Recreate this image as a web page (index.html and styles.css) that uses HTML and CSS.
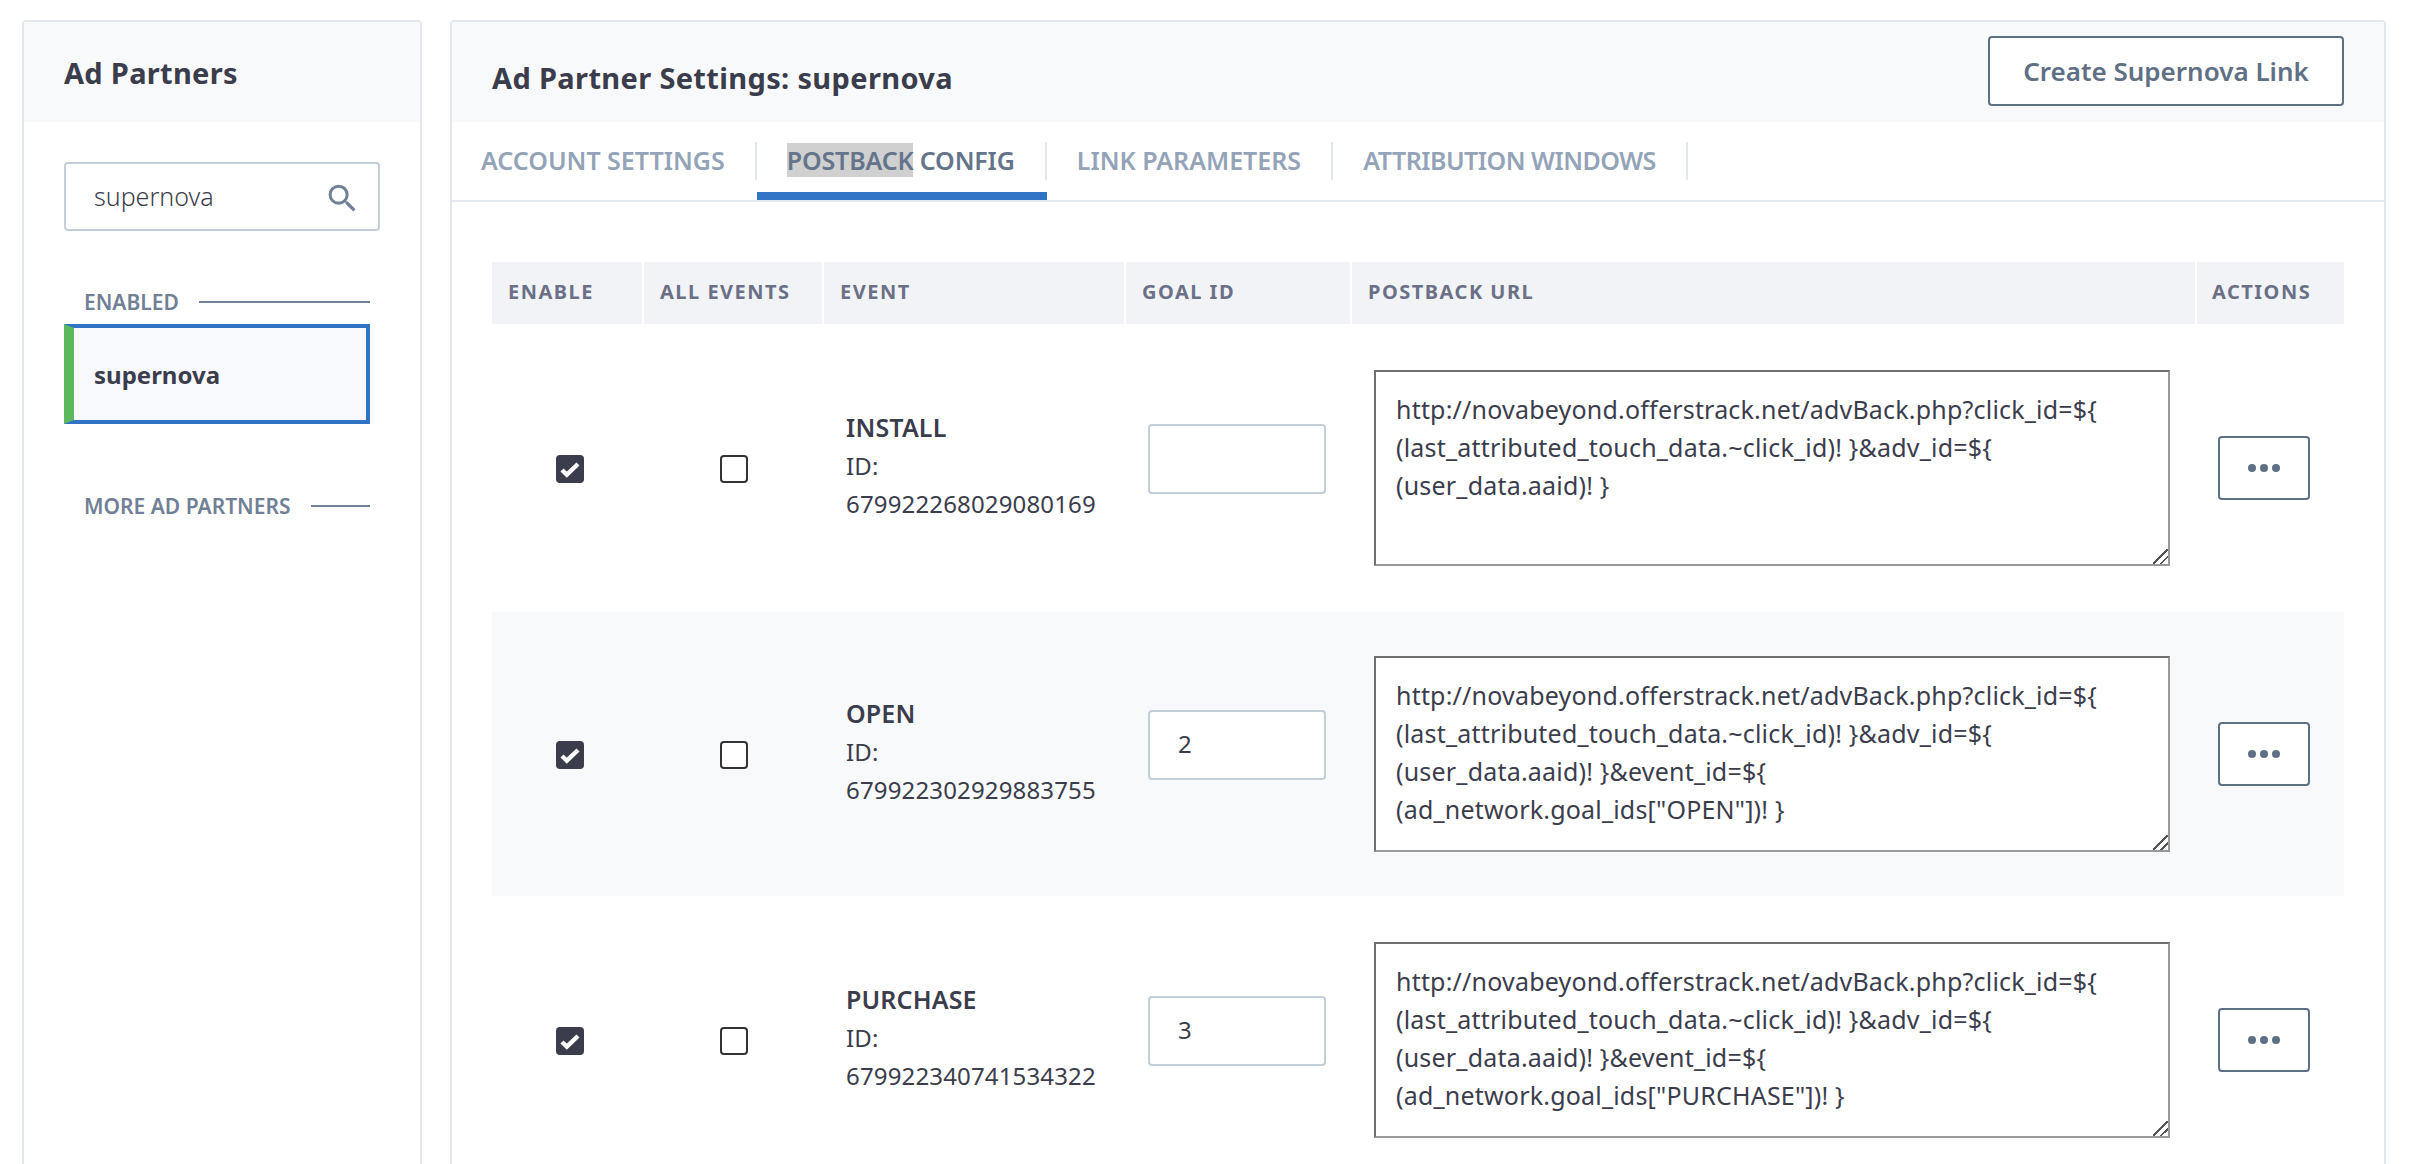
FILE: index.html
```html
<!DOCTYPE html>
<html lang="en">
<head>
<meta charset="utf-8">
<title>Ad Partner Settings</title>
<link rel="stylesheet" href="styles.css">
</head>
<body>

<div class="sidebar">
  <div class="sidebar_head">Ad Partners</div>
  <div class="sidebar_body">
    <div class="search">
      <span class="search_text">supernova</span>
      <svg class="search_icon" viewBox="0 0 24 24" width="37" height="37"><path d="M15.5 14h-.79l-.28-.27A6.47 6.47 0 0 0 16 9.5 6.5 6.5 0 1 0 9.5 16c1.61 0 3.09-.59 4.23-1.57l.27.28v.79l5 4.99L20.49 19l-4.99-5zm-6 0C7.01 14 5 11.99 5 9.5S7.01 5 9.5 5 14 7.01 14 9.5 11.99 14 9.5 14z"/></svg>
    </div>
    <div class="group_label first"><span>ENABLED</span><i></i></div>
    <div class="partner">supernova</div>
    <div class="group_label more"><span>MORE AD PARTNERS</span><i></i></div>
  </div>
</div>

<div class="main">
  <div class="main_head">
    <h2>Ad Partner Settings: supernova</h2>
    <button class="btn_create">Create Supernova Link</button>
  </div>

  <div class="tabs">
    <div class="tab"><span>ACCOUNT SETTINGS</span></div>
    <div class="tab active"><span><b>POSTBACK</b> CONFIG</span></div>
    <div class="tab"><span>LINK PARAMETERS</span></div>
    <div class="tab narrow"><span>ATTRIBUTION WINDOWS</span></div>
  </div>

  <div class="main_body">
    <table>
      <colgroup>
        <col class="c1"><col class="c2"><col class="c3"><col class="c4"><col class="c5"><col class="c6">
      </colgroup>
      <thead>
        <tr><th>ENABLE</th><th>ALL EVENTS</th><th>EVENT</th><th>GOAL ID</th><th>POSTBACK URL</th><th>ACTIONS</th></tr>
      </thead>
      <tbody>
        <tr>
          <td class="box_cell"><svg class="box" viewBox="0 0 28 28"><rect width="28" height="28" rx="4" fill="#3b3d4c"/><path d="M6 15l4.8 4.6L22 9" fill="none" stroke="#fff" stroke-width="4.4"/></svg></td>
          <td class="box_cell"><span class="box empty"></span></td>
          <td class="event"><strong>INSTALL</strong><br>ID:<br>679922268029080169</td>
          <td class="goal"><div class="goal_input"></div></td>
          <td class="url"><textarea spellcheck="false">http://novabeyond.offerstrack.net/advBack.php?click_id=${
(last_attributed_touch_data.~click_id)! }&amp;adv_id=${
(user_data.aaid)! }</textarea></td>
          <td class="actions"><button class="btn_more"><svg viewBox="0 0 32 8" width="32" height="8"><circle cx="4" cy="4" r="4"/><circle cx="16" cy="4" r="4"/><circle cx="28" cy="4" r="4"/></svg></button></td>
        </tr>
        <tr class="striped">
          <td class="box_cell"><svg class="box" viewBox="0 0 28 28"><rect width="28" height="28" rx="4" fill="#3b3d4c"/><path d="M6 15l4.8 4.6L22 9" fill="none" stroke="#fff" stroke-width="4.4"/></svg></td>
          <td class="box_cell"><span class="box empty"></span></td>
          <td class="event"><strong>OPEN</strong><br>ID:<br>679922302929883755</td>
          <td class="goal"><div class="goal_input">2</div></td>
          <td class="url"><textarea spellcheck="false">http://novabeyond.offerstrack.net/advBack.php?click_id=${
(last_attributed_touch_data.~click_id)! }&amp;adv_id=${
(user_data.aaid)! }&amp;event_id=${
(ad_network.goal_ids["OPEN"])! }</textarea></td>
          <td class="actions"><button class="btn_more"><svg viewBox="0 0 32 8" width="32" height="8"><circle cx="4" cy="4" r="4"/><circle cx="16" cy="4" r="4"/><circle cx="28" cy="4" r="4"/></svg></button></td>
        </tr>
        <tr>
          <td class="box_cell"><svg class="box" viewBox="0 0 28 28"><rect width="28" height="28" rx="4" fill="#3b3d4c"/><path d="M6 15l4.8 4.6L22 9" fill="none" stroke="#fff" stroke-width="4.4"/></svg></td>
          <td class="box_cell"><span class="box empty"></span></td>
          <td class="event"><strong>PURCHASE</strong><br>ID:<br>679922340741534322</td>
          <td class="goal"><div class="goal_input">3</div></td>
          <td class="url"><textarea spellcheck="false">http://novabeyond.offerstrack.net/advBack.php?click_id=${
(last_attributed_touch_data.~click_id)! }&amp;adv_id=${
(user_data.aaid)! }&amp;event_id=${
(ad_network.goal_ids["PURCHASE"])! }</textarea></td>
          <td class="actions"><button class="btn_more"><svg viewBox="0 0 32 8" width="32" height="8"><circle cx="4" cy="4" r="4"/><circle cx="16" cy="4" r="4"/><circle cx="28" cy="4" r="4"/></svg></button></td>
        </tr>
      </tbody>
    </table>
  </div>
</div>

</body>
</html>
```

FILE: styles.css
```css
html, body
{
height: 100%;
overflow: hidden;
}

body
{
margin: 0;
padding: 20px 24px 0 22px;
box-sizing: border-box;
display: flex;
gap: 28px;
background: #fff;
color: #3b3d4c;
font-family: "Noto Sans", sans-serif;
font-size: 24px;
}

.sidebar
{
width: 400px;
height: 1300px;
flex: none;
box-sizing: border-box;
border: 2px solid #e2e8ee;
border-radius: 4px;
}

.sidebar_head
{
height: 100px;
padding-left: 40px;
background: #f8f9fb;
display: flex;
align-items: center;
font-size: 29px;
font-weight: 700;
letter-spacing: 0.3px;
}

.sidebar_body
{
padding: 40px 0 0 40px;
}

.search
{
width: 316px;
height: 69px;
box-sizing: border-box;
border: 2px solid #c3ced9;
border-radius: 4px;
padding: 0 17px 0 28px;
display: flex;
align-items: center;
justify-content: space-between;
}

.search_text
{
margin-top: -2px;
font-size: 25px;
font-weight: 300;
}

.search_icon
{
fill: #718096;
margin-top: 4px;
}

.group_label
{
width: 306px;
box-sizing: border-box;
padding-left: 20px;
display: flex;
align-items: center;
gap: 20px;
color: #718096;
font-size: 21px;
font-weight: 600;
line-height: 28px;
}

.group_label i
{
flex: 1;
height: 2px;
background: #718096;
}

.first
{
margin-top: 57px;
}

.more
{
margin-top: 68px;
}

.partner
{
width: 306px;
height: 100px;
margin-top: 8px;
box-sizing: border-box;
border: 4px solid #3173c4;
border-left: 10px solid #5cb85c;
padding-left: 20px;
background: #f8f9fd;
display: flex;
align-items: center;
font-weight: 700;
}

.main
{
flex: 1;
height: 1300px;
box-sizing: border-box;
border: 2px solid #e2e8ee;
border-radius: 4px;
}

.main_head
{
height: 100px;
box-sizing: border-box;
padding: 14px 40px 0 40px;
background: #f8f9fb;
display: flex;
justify-content: space-between;
align-items: flex-start;
}

.main_head h2
{
margin: 23px 0 0;
font-size: 29px;
font-weight: 700;
letter-spacing: 0.35px;
line-height: 38px;
}

.btn_create
{
width: 356px;
height: 70px;
box-sizing: border-box;
border: 2px solid #5f6f84;
border-radius: 4px;
background: #fff;
color: #5f6f84;
font-family: inherit;
font-size: 26px;
font-weight: 600;
}

.tabs
{
height: 78px;
border-bottom: 2px solid #e2e8ee;
display: flex;
}

.tab
{
padding-top: 20px;
color: #94a3b8;
font-size: 25px;
font-weight: 600;
}

.tab span
{
display: block;
height: 38px;
padding: 0 30px;
border-right: 2px solid #e2e8ee;
line-height: 36px;
}

.tab:first-child span
{
padding-left: 29px;
}

.tab.active
{
color: #64748b;
letter-spacing: -0.15px;
box-shadow: inset 0 -8px 0 #3173c4;
}

.tab.narrow
{
letter-spacing: -0.5px;
}

.tab b
{
font-weight: inherit;
background: #d0d0d0;
}

.main_body
{
padding: 58px 39px 0 40px;
}

table
{
width: 1852px;
table-layout: fixed;
border-collapse: separate;
border-spacing: 0 2px;
}

.c1 { width: 152px; }
.c2 { width: 180px; }
.c3 { width: 302px; }
.c4 { width: 226px; }
.c5 { width: 845px; }
.c6 { width: 147px; }

th
{
height: 62px;
padding: 0 0 3px 16px;
box-sizing: border-box;
border-right: 2px solid #fff;
background: #f1f3f7;
color: #6b7086;
font-size: 20px;
font-weight: 700;
letter-spacing: 1.5px;
text-align: left;
}

th:last-child
{
border-right: 0;
padding-left: 15px;
}

td
{
padding: 44px 0;
vertical-align: middle;
}

.striped td
{
background: #f8f9fb;
}

.box_cell
{
text-align: center;
}

.box_cell:first-child
{
padding-left: 4px;
}

.box
{
display: inline-block;
width: 28px;
height: 28px;
margin-bottom: 2px;
box-sizing: border-box;
vertical-align: middle;
}

.box.empty
{
border: 2px solid #333;
border-radius: 4px;
background: #fff;
}

.event
{
padding: 44px 0 50px 22px;
letter-spacing: 0.15px;
line-height: 38px;
}

.event strong
{
font-size: 25px;
font-weight: 600;
}

.goal
{
padding-left: 22px;
}

.goal_input
{
width: 178px;
height: 70px;
margin-bottom: 18px;
box-sizing: border-box;
border: 2px solid #c3ced9;
border-radius: 4px;
padding-left: 28px;
background: #fff;
line-height: 64px;
}

.url
{
padding-left: 22px;
}

textarea
{
display: block;
width: 796px;
height: 196px;
box-sizing: border-box;
margin: 0;
border: 2px solid #999;
border-top-color: #6f6f6f;
border-left-color: #6f6f6f;
padding: 18px 20px;
background: #fff;
color: #3b3d4c;
font-family: inherit;
font-size: 25px;
letter-spacing: 0.2px;
line-height: 38px;
white-space: pre;
overflow: hidden;
}

textarea::-webkit-resizer
{
background: linear-gradient(135deg, transparent 46%, #555 46%, #555 54%, transparent 54%, transparent 72%, #555 72%, #555 80%, transparent 80%);
}

.actions
{
padding-left: 21px;
}

.btn_more
{
width: 92px;
height: 64px;
box-sizing: border-box;
border: 2px solid #5f6f84;
border-radius: 4px;
background: #fff;
display: flex;
align-items: center;
justify-content: center;
}

.btn_more svg
{
fill: #5f6f84;
}
```
